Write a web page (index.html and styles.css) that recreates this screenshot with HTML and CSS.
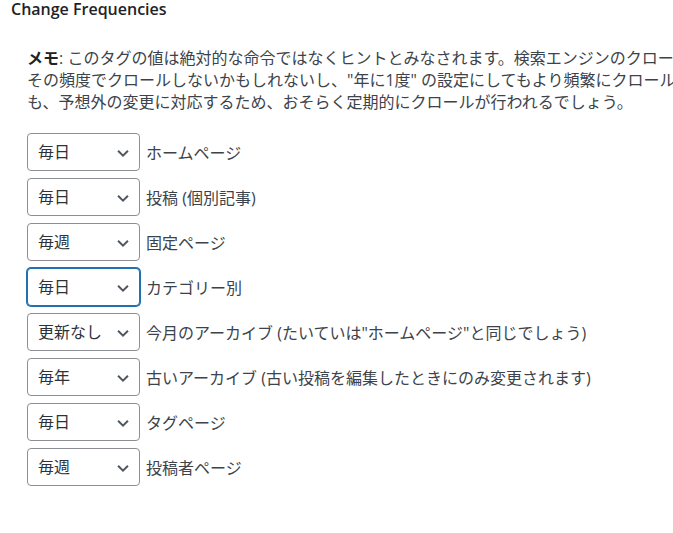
FILE: index.html
```html
<!DOCTYPE html>
<html lang="ja">
<head>
  <meta charset="UTF-8" />
  <meta name="viewport" content="width=device-width, initial-scale=1.0" />
  <title>Change Frequencies</title>
  <link rel="stylesheet" href="styles.css">
</head>
<body>

<!-- 更新頻度 -->
<h3 class="section-title">Change Frequencies</h3>

<div class="section-body">
  <p class="note"><strong>メモ</strong>: このタグの値は絶対的な命令ではなくヒントとみなされます。検索エンジンのクローラーはこの設定を考慮に入れますが、<br>その頻度でクロールしないかもしれないし、"年に1度" の設定にしてもより頻繁にクロールされるかもしれません。また "更新なし" のページ<br>も、予想外の変更に対応するため、おそらく定期的にクロールが行われるでしょう。</p>

  <ul class="freq-list">
    <li class="freq-row">
      <select class="freq-select"><option>毎日</option></select>
      <label>ホームページ</label>
    </li>
    <li class="freq-row">
      <select class="freq-select"><option>毎日</option></select>
      <label>投稿 (個別記事)</label>
    </li>
    <li class="freq-row">
      <select class="freq-select"><option>毎週</option></select>
      <label>固定ページ</label>
    </li>
    <li class="freq-row">
      <select class="freq-select focused"><option>毎日</option></select>
      <label>カテゴリー別</label>
    </li>
    <li class="freq-row">
      <select class="freq-select"><option>更新なし</option></select>
      <label>今月のアーカイブ (たいていは"ホームページ"と同じでしょう)</label>
    </li>
    <li class="freq-row">
      <select class="freq-select"><option>毎年</option></select>
      <label>古いアーカイブ (古い投稿を編集したときにのみ変更されます)</label>
    </li>
    <li class="freq-row">
      <select class="freq-select"><option>毎日</option></select>
      <label>タグページ</label>
    </li>
    <li class="freq-row">
      <select class="freq-select"><option>毎週</option></select>
      <label>投稿者ページ</label>
    </li>
  </ul>
</div>

</body>
</html>
```

FILE: styles.css
```css
* { box-sizing: border-box; }
body {
  font-family: 'Open Sans', 'Noto Sans CJK JP', sans-serif;
  background-color: #fff;
  color: #3c434a;
  margin: 0;
  overflow: hidden;
}
.section-title {
  font-size: 16px;
  font-weight: 600;
  line-height: 18px;
  color: #1d2327;
  margin: 0;
  padding: 0 0 0 11px;
}
.section-body {
  padding: 0 0 0 27px;
}
.note {
  font-size: 16px;
  line-height: 22px;
  margin: 29px 0 20px;
  white-space: nowrap;
}
.note strong {
  font-weight: 700;
  color: #1d2327;
}
.freq-list {
  list-style: none;
  margin: 0;
  padding: 0;
  display: flex;
  flex-direction: column;
  gap: 7px;
}
.freq-row {
  display: flex;
  align-items: center;
  gap: 6px;
  font-size: 16px;
}
.freq-select {
  -webkit-appearance: none;
  appearance: none;
  width: 113px;
  height: 38px;
  padding: 0 24px 0 10px;
  font-family: 'Open Sans', 'Noto Sans CJK JP', sans-serif;
  font-size: 16px;
  color: #2c3338;
  background: #fff url('data:image/svg+xml;utf8,<svg xmlns="http://www.w3.org/2000/svg" width="20" height="20" viewBox="0 0 20 20"><path d="M4.5 7.5l5.5 5.5 5.5-5.5" fill="none" stroke="%2350575e" stroke-width="2.2"/></svg>') no-repeat right 7px top 55%;
  background-size: 18px 18px;
  border: 1px solid #8c8f94;
  border-radius: 4px;
}
.freq-select.focused {
  border-color: #2271b1;
  box-shadow: 0 0 0 1px #2271b1;
}
```
